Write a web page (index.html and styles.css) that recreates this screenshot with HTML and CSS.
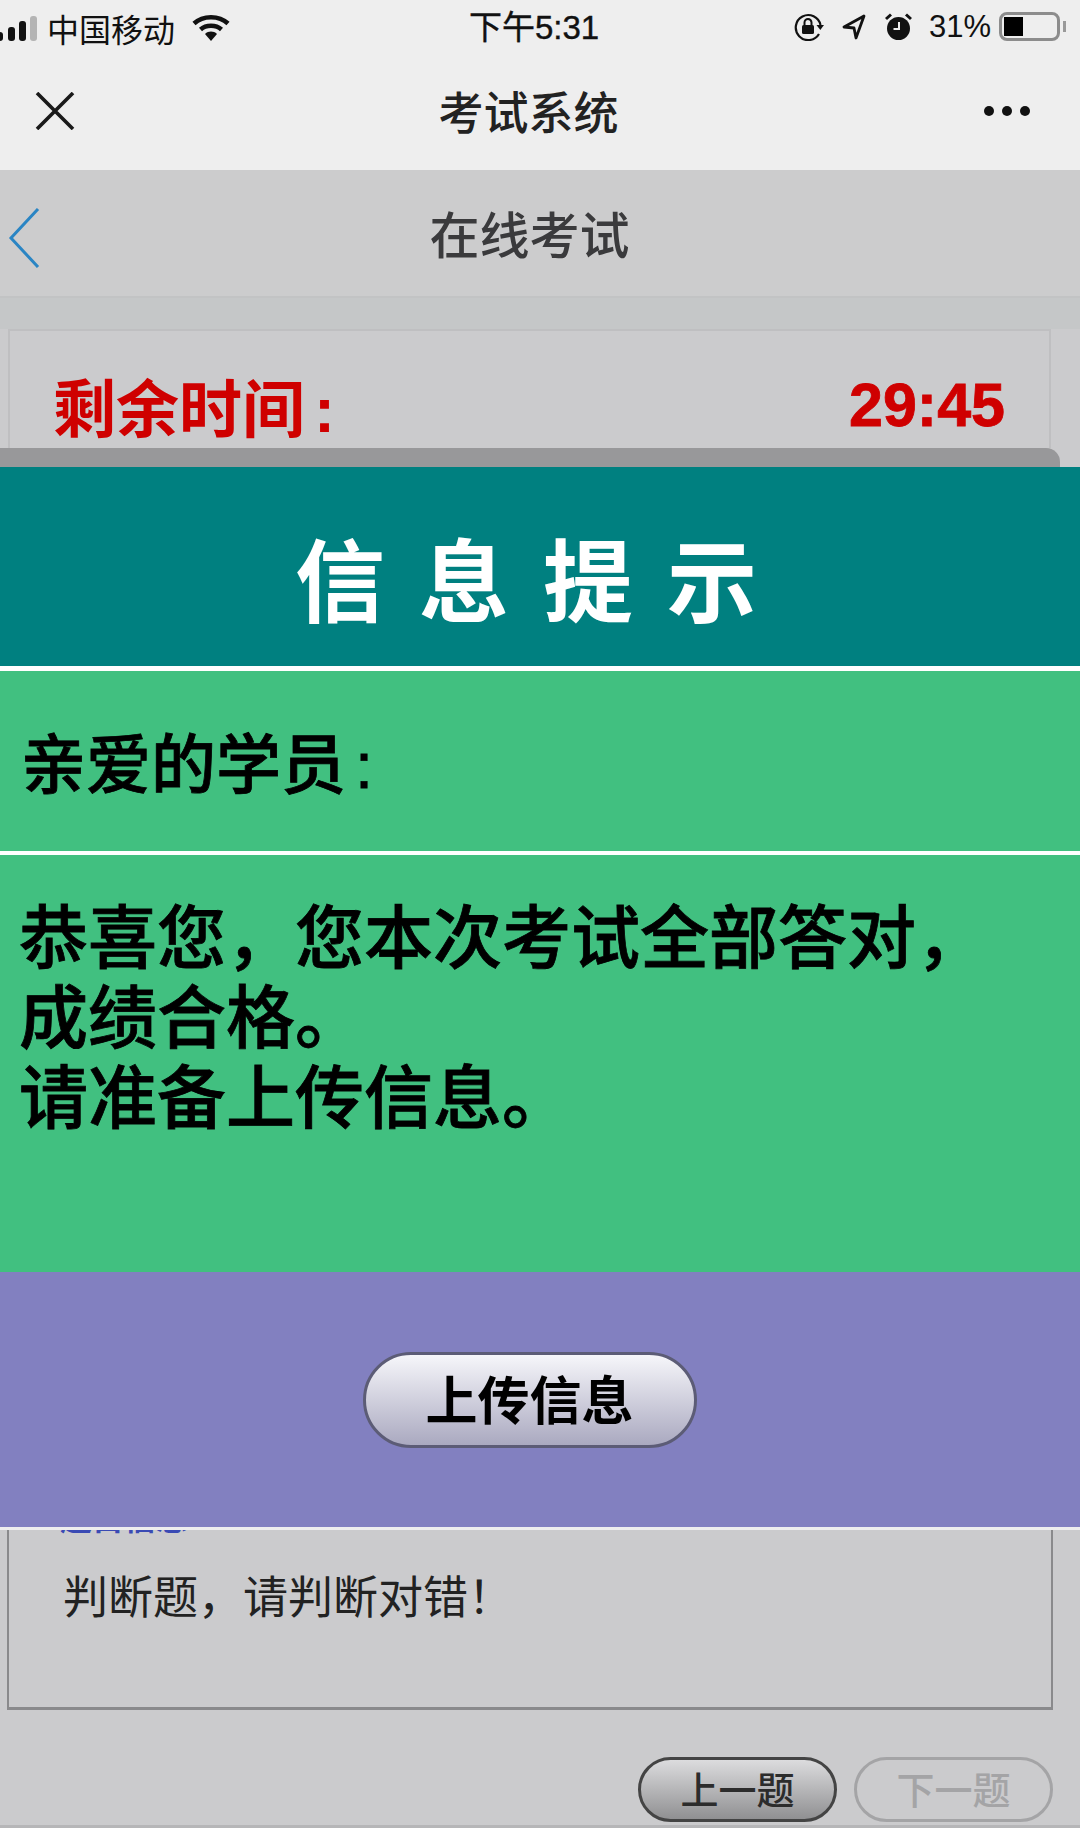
FILE: index.html
```html
<!DOCTYPE html>
<html>
  <head>
    <title>考试系统</title>
    <link rel="stylesheet" href="styles.css">
  </head>

  <body>
    <div class="phone">
      <div class="status">
        <div class="status-left">
          <svg class="signal" width="38" height="28" viewBox="0 0 38 28">
            <rect x="-4" y="18" width="7" height="9" rx="3" fill="#111" />
            <rect x="8" y="13" width="7" height="14" rx="3" fill="#111" />
            <rect x="19" y="7" width="7" height="20" rx="3" fill="#111" />
            <rect x="30" y="2" width="7" height="25" rx="3" fill="#b4b4b4" />
          </svg>
          <span class="carrier">中国移动</span>
          <svg class="wifi" width="38" height="28" viewBox="0 0 38 28">
            <path d="M2 9.5 C11 1 27 1 36 9.5" fill="none" stroke="#111" stroke-width="4.5" />
            <path d="M8.5 15.5 C14 10.5 24 10.5 29.5 15.5" fill="none" stroke="#111" stroke-width="4.5" />
            <path d="M13 20 C16.5 16.8 21.5 16.8 25 20 L19 27 Z" fill="#111" />
          </svg>
        </div>
        <div class="status-time">下午5:31</div>
        <div class="status-right">
          <svg width="30" height="28" viewBox="0 0 30 28">
            <path d="M25 21 A12.5 12.5 0 1 1 26.5 12" fill="none" stroke="#111" stroke-width="2.2" />
            <path d="M22.5 12 L30 12 L26.3 17 Z" fill="#111" />
            <rect x="8" y="12" width="12" height="9" rx="1.5" fill="#111" />
            <path d="M10.5 12 V9.5 A3.5 3.5 0 0 1 17.5 9.5 V12" fill="none" stroke="#111" stroke-width="2" />
          </svg>
          <svg class="arrow" width="24" height="26" viewBox="0 0 24 26">
            <path d="M22 2 L2 13 L12 14 L14 24 Z" fill="none" stroke="#111" stroke-width="2.8" stroke-linejoin="round" />
          </svg>
          <svg class="alarm" width="27" height="28" viewBox="0 0 27 28">
            <circle cx="13.5" cy="15.5" r="11.5" fill="#111" />
            <path d="M1 6 L6 1.5 M26 6 L21 1.5" stroke="#111" stroke-width="3" />
            <path d="M14 9 V16 H8.5" fill="none" stroke="#eee" stroke-width="2" />
          </svg>
          <span class="percent">31%</span>
          <div class="battery"><div class="battery-fill"></div></div>
          <div class="battery-nib"></div>
        </div>
      </div>

      <div class="wxnav">
        <svg class="wxclose" width="40" height="38" viewBox="0 0 40 38">
          <path d="M2 1 L38 37 M38 1 L2 37" stroke="#1a1a1a" stroke-width="3.6" />
        </svg>
        <div class="wxtitle">考试系统</div>
        <div class="wxmore"><i></i><i></i><i></i></div>
      </div>

      <div class="page">
        <div class="page-header">
          <svg class="back" width="32" height="60" viewBox="0 0 32 60">
            <path d="M30 1 L3 30 L30 59" fill="none" stroke="#2a85c4" stroke-width="3" />
          </svg>
          <div class="page-title">在线考试</div>
        </div>
        <div class="band"></div>

        <div class="timer-card">
          <div class="timer">
            <span class="timer-label">剩余时间<span class="colon">:</span></span>
            <span class="timer-value">29:45</span>
          </div>
          <div class="progress"></div>
        </div>

        <div class="question">
          <div class="question-label">题目信息</div>
          <div class="question-text">判断题，请判断对错！</div>
        </div>

        <div class="pager">
          <button class="pill">上一题</button>
          <button class="pill pill-off">下一题</button>
        </div>
      </div>

      <!-- message dialog over the page -->
      <div class="dialog">
        <div class="dialog-head">信息提示</div>
        <div class="dialog-to">亲爱的学员<span class="colon">:</span></div>
        <div class="dialog-body">
          恭喜您，您本次考试全部答对，<br />
          成绩合格。<br />
          请准备上传信息。
        </div>
        <div class="dialog-foot">
          <button class="upload">上传信息</button>
        </div>
      </div>
    </div>
  </body>
</html>
```

FILE: styles.css
```css
html,
body {
  margin: 0;
  padding: 0;
}

body {
  font-family: "Liberation Sans", "Noto Sans CJK SC", sans-serif;
  background-color: #cbcbcd;
}

.phone {
  position: relative;
  width: 1080px;
  height: 1828px;
  overflow: hidden;
  display: flex;
  flex-direction: column;
}

.colon {
  margin-left: 9px;
}

.status {
  height: 56px;
  background-color: #eeeeee;
  display: flex;
  align-items: center;
  justify-content: space-between;
  color: #111;
  position: relative;
}

.status-left {
  display: flex;
  align-items: center;
}

.carrier {
  font-size: 32px;
  margin-left: 9px;
}

.wifi {
  margin-left: 17px;
}

.status-time {
  position: absolute;
  left: 469px;
  top: 6px;
  font-size: 33px;
  line-height: 44px;
  -webkit-text-stroke: 0.4px #111;
}

.status-right {
  display: flex;
  align-items: center;
  padding: 0 14px 3px 0;
}

.arrow {
  margin-left: 18px;
}

.alarm {
  margin-left: 19px;
}

.percent {
  font-size: 31px;
  margin-left: 17px;
  width: 70px;
}

.battery {
  width: 51px;
  height: 19px;
  border: 3px solid #8c8c8c;
  border-radius: 8px;
  padding: 2px;
}

.battery-fill {
  width: 19px;
  height: 19px;
  background-color: #000;
}

.battery-nib {
  width: 3px;
  height: 11px;
  margin-left: 3px;
  background-color: #999;
}

.wxnav {
  height: 114px;
  background-color: #eeeeee;
  display: flex;
  align-items: center;
  justify-content: space-between;
  padding: 0 50px 4px 35px;
  box-sizing: border-box;
}

.wxtitle {
  font-size: 45px;
  font-weight: 500;
  color: #222;
  margin: 0 0 2px -2px;
}

.wxmore {
  display: flex;
  gap: 8px;
}

.wxmore i {
  width: 10px;
  height: 10px;
  border-radius: 50%;
  background-color: #111;
}

.page {
  flex: 1;
  display: flex;
  flex-direction: column;
  min-height: 0;
}

.page-header {
  height: 128px;
  background-color: #cccccd;
  border-bottom: 2px solid #c2c3c4;
  box-sizing: border-box;
  display: flex;
  align-items: center;
  justify-content: center;
  position: relative;
}

.back {
  position: absolute;
  left: 8px;
  top: 38px;
}

.page-title {
  font-size: 50px;
  font-weight: 500;
  color: #3a3a3c;
  margin: 0 21px 2px 0;
}

.band {
  height: 31px;
  background-color: #c5c7c8;
}

.timer {
  height: 119px;
  margin: 0 29px 0 8px;
  background-color: #cbcbcd;
  border: 2px solid #bfbfc1;
  border-bottom: none;
  box-sizing: border-box;
  display: flex;
  align-items: center;
  justify-content: space-between;
  padding: 30px 44px 0 43px;
  color: #cf0000;
  font-weight: bold;
}

.timer-label {
  font-size: 63px;
}

.timer-value {
  font-size: 61px;
  -webkit-text-stroke: 0.8px #cf0000;
}

.progress {
  width: 1060px;
  height: 60px;
  background-color: #98989a;
  border-radius: 0 14px 0 0;
}

.question {
  flex: 1;
  margin: 40px 27px 0 7px;
  border: 2px solid #8a8a8c;
  border-bottom-width: 3px;
  box-sizing: border-box;
  display: flex;
  flex-direction: column;
  justify-content: flex-end;
  padding: 0 0 78px 54px;
}

.question-label {
  font-size: 32px;
  font-weight: bold;
  line-height: 44px;
  color: #3a4ab4;
  margin: 0 0 28px -3px;
}

.question-text {
  font-size: 45px;
  line-height: 60px;
  color: #222;
}

.pager {
  height: 118px;
  box-sizing: border-box;
  display: flex;
  justify-content: flex-end;
  gap: 17px;
  padding: 47px 27px 0 0;
  border-bottom: 3px solid #b6b6b8;
}

.pill {
  width: 199px;
  height: 65px;
  border: 3px solid #444;
  border-radius: 33px;
  background: linear-gradient(#dcdcde, #909092);
  font-family: inherit;
  font-size: 38px;
  font-weight: 500;
  color: #2c2c2c;
  padding: 0 0 5px;
}

.pill-off {
  border-color: #a4a4a6;
  background: #cbcbcd;
  color: #a4a4a6;
}

.dialog {
  position: absolute;
  left: 0;
  top: 467px;
  width: 1080px;
  display: flex;
  flex-direction: column;
  background-color: #fff;
}

.dialog-head {
  height: 199px;
  background-color: #008080;
  color: #fff;
  font-size: 90px;
  font-weight: bold;
  letter-spacing: 34px;
  padding: 18px 0 0 6px;
  box-sizing: border-box;
  display: flex;
  align-items: center;
  justify-content: center;
}

.dialog-to {
  height: 180px;
  margin-top: 5px;
  background-color: #41c080;
  color: #000;
  font-size: 65px;
  font-weight: 500;
  -webkit-text-stroke: 0.8px #000;
  line-height: 190px;
  padding-left: 21px;
  box-sizing: border-box;
}

.dialog-body {
  height: 417px;
  margin-top: 4px;
  background-color: #41c080;
  color: #000;
  font-size: 69px;
  font-weight: 500;
  -webkit-text-stroke: 0.8px #000;
  line-height: 80px;
  padding: 45px 0 0 19px;
  box-sizing: border-box;
}

.dialog-foot {
  height: 255px;
  background-color: #8280c0;
  border-bottom: 3px solid #eee;
  display: flex;
  justify-content: center;
}

.upload {
  width: 334px;
  height: 96px;
  margin: 80px 21px 0 0;
  border: 3px solid #5c5c76;
  border-radius: 48px;
  background: linear-gradient(#f6f6fa, #aaa9c0);
  font-family: inherit;
  font-size: 52px;
  font-weight: bold;
  color: #000;
  padding: 0 0 6px;
}
```
